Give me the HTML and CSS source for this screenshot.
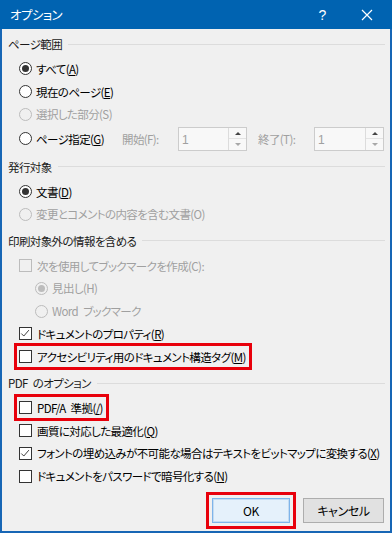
FILE: index.html
```html
<!DOCTYPE html>
<html lang="ja">
  <head>
    <meta charset="UTF-8" />
    <title>オプション</title>
    <link rel="stylesheet" href="styles.css">
  </head>
  <body>
    <!-- Barre de titre -->
    <div class="titlebar">
      <span class="title">オプション</span>
      <span class="tb-help">?</span>
      <span class="tb-close">
        <svg viewBox="0 0 12 12" width="12" height="12"><path d="M1 1L11 11M11 1L1 11" stroke="#fff" stroke-width="1.2" fill="none"/></svg>
      </span>
    </div>

    <div class="dialog">
      <!-- Page range -->
      <div class="group">
        <div class="group-title"><span>ページ範囲</span></div>
        <div class="row"><span class="radio checked"></span>すべて(<u>A</u>)</div>
        <div class="row"><span class="radio"></span>現在のページ(<u>E</u>)</div>
        <div class="row disabled"><span class="radio"></span>選択した部分(S)</div>
        <div class="row spin-row">
          <span class="radio"></span><span class="spin-name">ページ指定(<u>G</u>)</span>
          <span class="spin-label">開始(F):</span>
          <span class="spin"><span class="spin-value">1</span><span class="spin-btns"><span class="arr up"></span><span class="arr down"></span></span></span>
          <span class="spin-label second">終了(T):</span>
          <span class="spin last"><span class="spin-value">1</span><span class="spin-btns"><span class="arr up"></span><span class="arr down"></span></span></span>
        </div>
      </div>

      <div class="group">
        <div class="group-title"><span>発行対象</span></div>
        <div class="row"><span class="radio checked"></span>文書(<u>D</u>)</div>
        <div class="row disabled"><span class="radio"></span>変更とコメントの内容を含む文書(O)</div>
      </div>

      <div class="group">
        <div class="group-title"><span>印刷対象外の情報を含める</span></div>
        <div class="row disabled"><span class="check"></span>次を使用してブックマークを作成(C):</div>
        <div class="row disabled sub"><span class="radio checked"></span>見出し(H)</div>
        <div class="row disabled sub"><span class="radio"></span>Word ブックマーク</div>
        <div class="row"><span class="check checked"><svg viewBox="0 0 13 13" width="11" height="11"><path d="M1.5 6.5L4.5 9.5L10.5 2.5" stroke="#333" stroke-width="1.1" fill="none"/></svg></span>ドキュメントのプロパティ(<u>R</u>)</div>
        <div class="row"><span class="mark"><span class="check"></span>アクセシビリティ用のドキュメント構造タグ(<u>M</u>)</span></div>
      </div>

      <div class="group">
        <div class="group-title"><span>PDF のオプション</span></div>
        <div class="row"><span class="mark"><span class="check"></span>PDF/A 準拠(<u>/</u>)</span></div>
        <div class="row"><span class="check"></span>画質に対応した最適化(<u>Q</u>)</div>
        <div class="row"><span class="check checked"><svg viewBox="0 0 13 13" width="11" height="11"><path d="M1.5 6.5L4.5 9.5L10.5 2.5" stroke="#333" stroke-width="1.1" fill="none"/></svg></span>フォントの埋め込みが不可能な場合はテキストをビットマップに変換する(<u>X</u>)</div>
        <div class="row"><span class="check"></span>ドキュメントをパスワードで暗号化する(<u>N</u>)</div>
      </div>

      <div class="buttons">
        <span class="btn-mark"><button class="btn default">OK</button></span>
        <button class="btn">キャンセル</button>
      </div>
    </div>
  </body>
</html>
```

FILE: styles.css
```css
/* Fenêtre */
body {
  margin: 0;
  height: 533px;
  background-color: #1766b5;
  display: flex;
  flex-direction: column;
  font-family: "Noto Sans CJK JP", sans-serif;
  font-size: 11.5px;
  letter-spacing: -0.6px;
  word-spacing: 3px;
  font-feature-settings: "palt";
  color: #000;
  overflow: hidden;
}

.titlebar {
  height: 29px;
  background-color: #0063b1;
  color: #fff;
  display: flex;
  align-items: center;
  flex-shrink: 0;
}

.titlebar .title {
  margin-left: 10px;
  font-size: 12.5px;
  flex: 1;
}

.tb-help {
  width: 14px;
  text-align: center;
  font-family: "Liberation Sans", sans-serif;
  font-size: 14px;
  margin-right: 32px;
}

.tb-close {
  display: flex;
  margin-right: 19px;
}

.dialog {
  flex: 1;
  margin: 0 2px 2px;
  background-color: #f0f0f0;
  padding: 5px 5px 0 6px;
  display: flex;
  flex-direction: column;
}

.group {
  margin-bottom: 5px;
}

.group-title {
  height: 20px;
  display: flex;
  align-items: center;
  color: #1a1a1a;
  margin-bottom: 3.5px;
}

.group-title::after {
  content: "";
  flex: 1;
  height: 1px;
  background-color: #dcdcdc;
  margin-left: 6px;
}

.row {
  height: 22.75px;
  display: flex;
  align-items: center;
  padding-left: 11px;
  white-space: nowrap;
}

.row.sub {
  padding-left: 27px;
}

.row.disabled {
  color: #a0a0a0;
}

.spin-row {
  height: 26px;
}

/* Boutons radio et cases */
.radio {
  width: 11px;
  height: 11px;
  border: 1px solid #333;
  border-radius: 50%;
  background-color: #fff;
  margin-right: 4px;
  display: flex;
  align-items: center;
  justify-content: center;
  flex-shrink: 0;
}

.radio.checked::after {
  content: "";
  width: 7px;
  height: 7px;
  border-radius: 50%;
  background-color: #333;
}

.disabled .radio {
  border-color: #bcbcbc;
  background-color: #f0f0f0;
}

.disabled .radio.checked::after {
  background-color: #bcbcbc;
}

.check {
  width: 11px;
  height: 11px;
  border: 1px solid #333;
  background-color: #fff;
  margin-right: 5px;
  display: flex;
  align-items: center;
  justify-content: center;
  flex-shrink: 0;
}

.disabled .check {
  border-color: #bcbcbc;
  background-color: #f0f0f0;
}

/* Champs numériques */
.spin-name {
  width: 86px;
}

.spin-label {
  color: #a0a0a0;
  width: 56px;
}

.spin-label.second {
  margin-left: 11px;
}

.spin {
  display: flex;
  width: 67px;
  height: 22px;
  border: 1px solid #cccccc;
  background-color: #f8f8f8;
}

.spin.last {
  width: 68px;
}

.spin-value {
  flex: 1;
  color: #a0a0a0;
  padding-left: 3px;
  line-height: 24px;
  font-family: "Liberation Sans", sans-serif;
  font-size: 12px;
}

.spin-btns {
  width: 17px;
  border-left: 1px solid #dcdcdc;
  display: flex;
  flex-direction: column;
}

.arr {
  flex: 1;
  display: flex;
  align-items: center;
  justify-content: center;
}

.arr::after {
  content: "";
  border-left: 3px solid transparent;
  border-right: 3px solid transparent;
}

.arr.up {
  border-bottom: 1px solid #e3e3e3;
}

.arr.up::after {
  border-bottom: 3px solid #444;
}

.arr.down::after {
  border-top: 3px solid #a8a8a8;
}

/* Annotations rouges */
.mark {
  display: flex;
  align-items: center;
  outline: 3px solid #e8000b;
  outline-offset: 2px;
  padding-right: 1px;
  height: 17px;
}

/* Boutons */
.buttons {
  margin-top: auto;
  margin-bottom: 8px;
  display: flex;
  justify-content: flex-end;
  align-items: center;
  gap: 13px;
  padding-right: 1px;
}

.btn {
  width: 81px;
  height: 25px;
  font-family: "Noto Sans CJK JP", sans-serif;
  font-size: 12px;
  letter-spacing: -0.4px;
  font-feature-settings: "palt";
  background-color: #e1e1e1;
  border: 1px solid #adadad;
  padding: 0;
  color: #000;
}

.btn.default {
  width: 78px;
  background-color: #e5f1fb;
  border: 1px solid #7eb4ea;
  box-shadow: inset 0 0 0 1px #c4dcf2;
}

.btn-mark {
  display: flex;
  outline: 3px solid #e8000b;
  outline-offset: 3px;
}
```
